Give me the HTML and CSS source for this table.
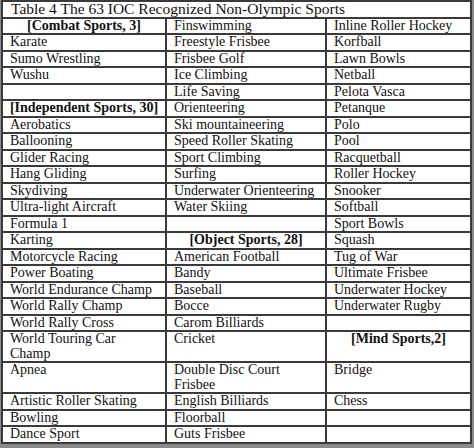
FILE: index.html
```html
<!DOCTYPE html>
<html>
<head>
<meta charset="utf-8">
<link rel="stylesheet" href="styles.css">
</head>
<body>
<table class="sports">
<colgroup><col class="c1"><col class="c2"><col class="c3"></colgroup>
<tr><td colspan="3" class="title">Table 4 The 63 IOC Recognized Non-Olympic Sports</td></tr>
<tr><td class="head">[Combat Sports, 3]</td><td>Finswimming</td><td>Inline Roller Hockey</td></tr>
<tr><td>Karate</td><td>Freestyle Frisbee</td><td>Korfball</td></tr>
<tr><td>Sumo Wrestling</td><td>Frisbee Golf</td><td>Lawn Bowls</td></tr>
<tr><td>Wushu</td><td>Ice Climbing</td><td>Netball</td></tr>
<tr><td></td><td>Life Saving</td><td>Pelota Vasca</td></tr>
<tr><td class="head">[Independent Sports, 30]</td><td>Orienteering</td><td>Petanque</td></tr>
<tr><td>Aerobatics</td><td>Ski mountaineering</td><td>Polo</td></tr>
<tr><td>Ballooning</td><td>Speed Roller Skating</td><td>Pool</td></tr>
<tr><td>Glider Racing</td><td>Sport Climbing</td><td>Racquetball</td></tr>
<tr><td>Hang Gliding</td><td>Surfing</td><td>Roller Hockey</td></tr>
<tr><td>Skydiving</td><td>Underwater Orienteering</td><td>Snooker</td></tr>
<tr><td>Ultra-light Aircraft</td><td>Water Skiing</td><td>Softball</td></tr>
<tr><td>Formula 1</td><td></td><td>Sport Bowls</td></tr>
<tr><td>Karting</td><td class="head">[Object Sports, 28]</td><td>Squash</td></tr>
<tr><td>Motorcycle Racing</td><td>American Football</td><td>Tug of War</td></tr>
<tr><td>Power Boating</td><td>Bandy</td><td>Ultimate Frisbee</td></tr>
<tr><td>World Endurance Champ</td><td>Baseball</td><td>Underwater Hockey</td></tr>
<tr><td>World Rally Champ</td><td>Bocce</td><td>Underwater Rugby</td></tr>
<tr><td>World Rally Cross</td><td>Carom Billiards</td><td></td></tr>
<tr><td>World Touring Car<br>Champ</td><td>Cricket</td><td class="head">[Mind Sports,2]</td></tr>
<tr><td>Apnea</td><td>Double Disc Court<br>Frisbee</td><td>Bridge</td></tr>
<tr><td>Artistic Roller Skating</td><td>English Billiards</td><td>Chess</td></tr>
<tr><td>Bowling</td><td>Floorball</td><td></td></tr>
<tr><td>Dance Sport</td><td>Guts Frisbee</td><td></td></tr>
</table>
</body>
</html>
```
FILE: styles.css
```css
html, body {
  margin: 0;
  padding: 0;
  background: #8a8a8a;
}
body {
  width: 474px;
  height: 448px;
  overflow: hidden;
}
.sports {
  margin: 0 0 0 1px;
  width: 471px;
  table-layout: fixed;
  border-collapse: collapse;
  background: #fff;
  font-family: "Liberation Serif", "Times New Roman", serif;
  font-size: 14px;
  line-height: 14.5px;
  color: #111;
}
.c1 { width: 164px; }
.c2 { width: 160px; }
.c3 { width: 145px; }
.sports td {
  border: 2px solid #3a3a3a;
  padding: 0 0 0 7px;
  vertical-align: top;
  white-space: nowrap;
}
.sports td.title {
  padding-left: 8px;
  font-size: 15.5px;
}
.sports td.head {
  font-weight: bold;
  text-align: center;
  padding: 0;
}
```
